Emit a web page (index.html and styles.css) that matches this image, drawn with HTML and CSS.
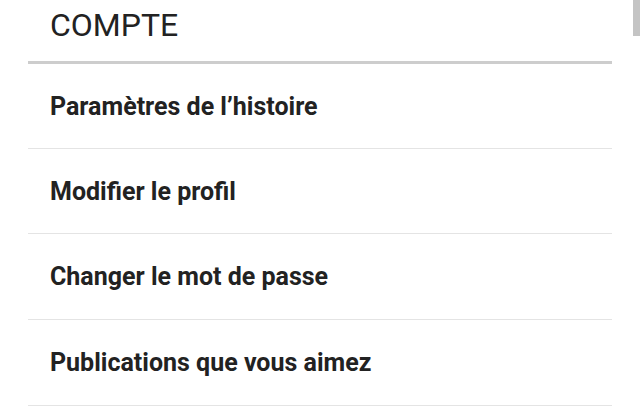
FILE: index.html
```html
<!DOCTYPE html>
<html lang="fr">
<head>
<meta charset="utf-8">
<link rel="stylesheet" href="styles.css">
</head>
<body>
<div class="page">
  <div class="panel">
    <div class="header">COMPTE</div>
    <div class="item">Paramètres de l’histoire</div>
    <div class="item">Modifier le profil</div>
    <div class="item">Changer le mot de passe</div>
    <div class="item">Publications que vous aimez</div>
  </div>
  <div class="scrollbar"></div>
</div>
</body>
</html>
```
FILE: styles.css
```css
html, body {
  margin: 0;
  padding: 0;
  background: #ffffff;
}
.page {
  position: relative;
  width: 640px;
  height: 420px;
  overflow: hidden;
  font-family: Roboto, "Liberation Sans", sans-serif;
  color: #222222;
}
.panel {
  margin-left: 28px;
  width: 584px;
}
.header {
  box-sizing: border-box;
  height: 64px;
  padding: 6px 0 0 22px;
  font-size: 32px;
  line-height: 38px;
  font-weight: 400;
  border-bottom: 3px solid #cdcdcd;
}
.item {
  box-sizing: border-box;
  height: 85px;
  display: flex;
  align-items: center;
  padding-left: 22px;
  font-size: 25px;
  font-weight: 700;
  border-bottom: 1px solid #e4e4e4;
}
.item + .item + .item {
  height: 86px;
}
.scrollbar {
  position: absolute;
  top: 0;
  right: 0;
  width: 7px;
  height: 36px;
  background: #c4c4c4;
}
```
